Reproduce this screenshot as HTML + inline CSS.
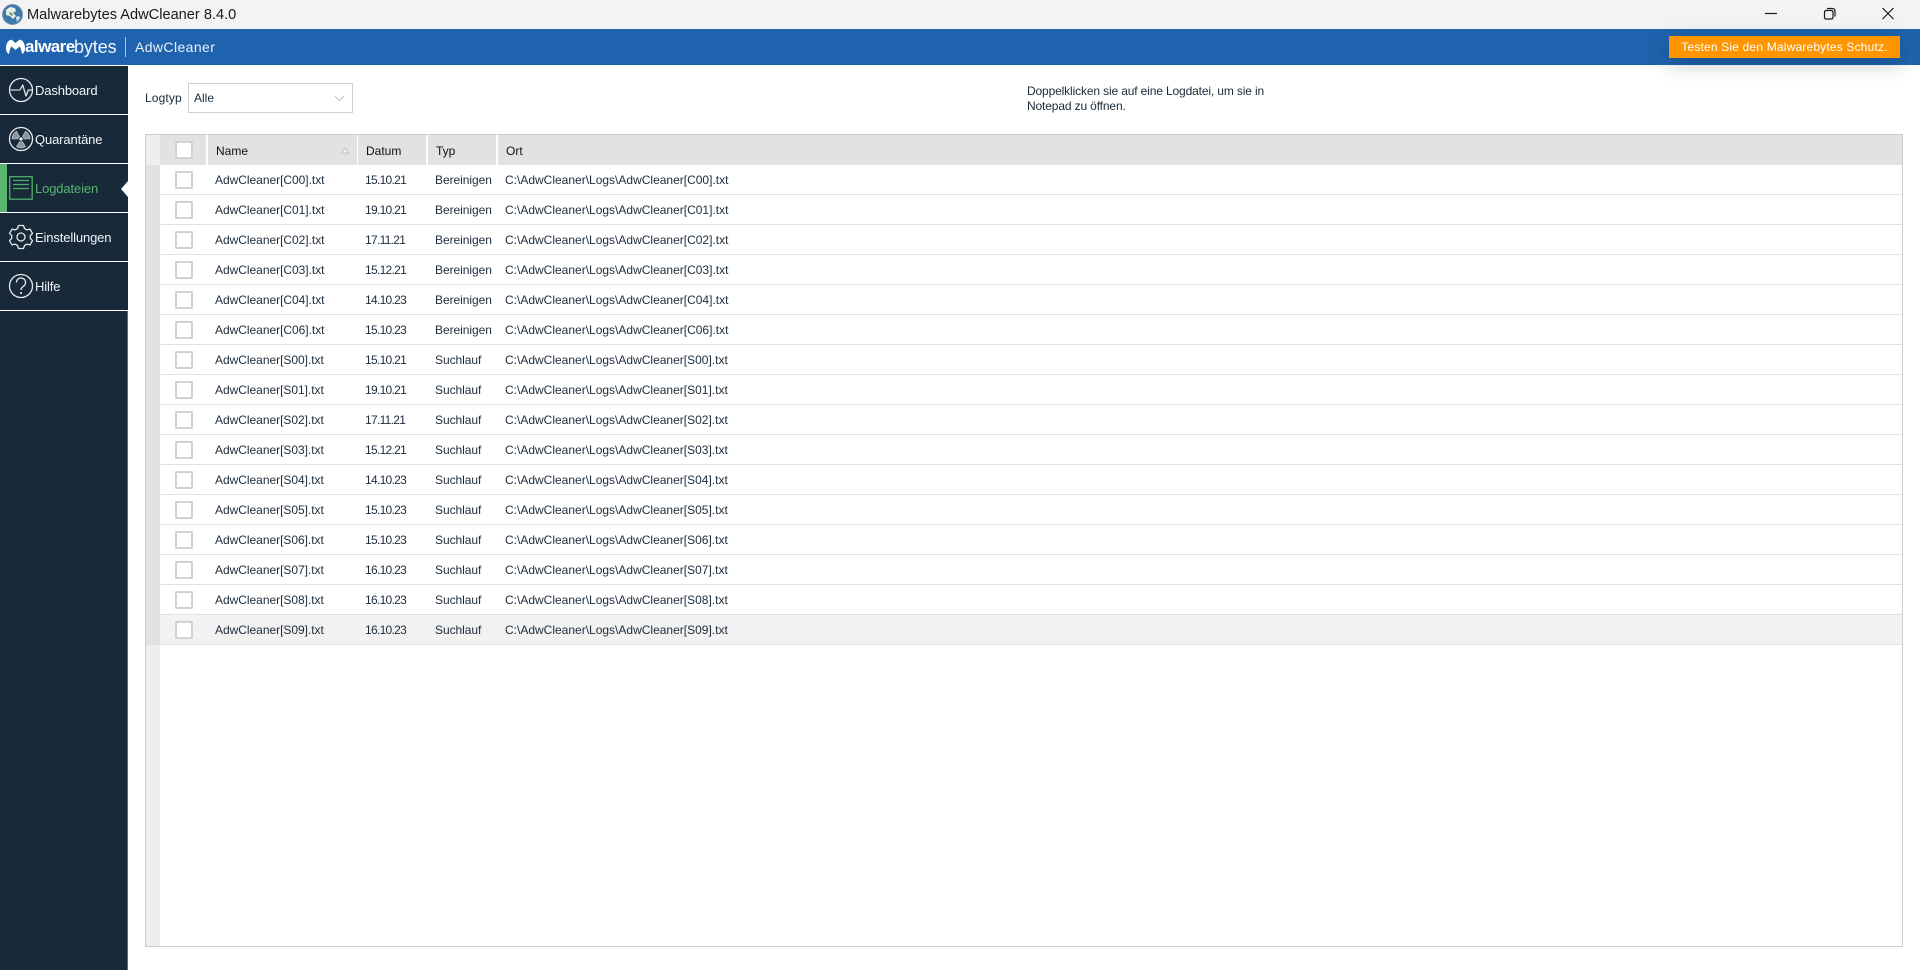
<!DOCTYPE html>
<html lang="de"><head><meta charset="utf-8"><title>Malwarebytes AdwCleaner 8.4.0</title>
<style>
html,body{margin:0;padding:0;width:1920px;height:970px;overflow:hidden;background:#fff;font-family:"Liberation Sans",sans-serif;color:#1a2a3a}
div,span,svg{position:absolute;box-sizing:border-box}
.t{white-space:nowrap;line-height:16px}
.nav{left:35px;font-size:13px;color:#f2f6fa;letter-spacing:-.13px;height:16px}
.sep{left:0;width:128px;height:1px;background:#fff}
.h{top:135px;height:30px;background:#e2e2e2;font-size:12px;line-height:32px;color:#111;white-space:nowrap}
.r{left:160px;width:1742px;height:30px;border-bottom:1px solid #e2e2e2;font-size:12px;color:#1d2c3b;white-space:nowrap}
.r span{top:1px;line-height:29px}
.r .a{left:55px;letter-spacing:-.03px}.r .b{left:205px;letter-spacing:-.7px}.r .c{left:275px;letter-spacing:-.05px}.r .d{left:345px}
.cb{left:15px;top:6px;width:18px;height:18px;border:2px solid #d0d3d6;border-radius:1px;background:#fff}
</style></head><body>
<div style="left:0;top:0;width:1920px;height:29px;background:#f3f3f3"></div>
<svg style="left:2px;top:4px" width="21" height="21" viewBox="0 0 21 21"><circle cx="10.500" cy="10.500" r="10" fill="#3f78ad"/><circle cx="10.500" cy="10.500" r="10" fill="none" stroke="#7b93ab" stroke-width="1"/><path d="M4 6l4-3 5 1 1 3-3 2 3 3-3 3-3-3-4-1z" fill="#e6efe8"/><path d="M14 13l3-1 1 2-3 4z" fill="#dce8ee"/><path d="M7 8l3 1 1 3-3-1z" fill="#5d9a63"/></svg>
<div class="t" style="left:27px;top:6px;font-size:14.600px;line-height:18px;color:#1a1a1a">Malwarebytes AdwCleaner 8.4.0</div>
<svg style="left:1760px;top:4px" width="150" height="20" viewBox="0 0 150 20" fill="none" stroke="#1a1a1a" stroke-width="1.200"><path d="M5 9.500h12"/><rect x="64.500" y="6.500" width="8.500" height="8.500" rx="1.500"/><path d="M67 4.500h5.500a2.500 2.500 0 0 1 2.500 2.500v5.500"/><path d="M122.500 4l11 11M133.500 4l-11 11"/></svg>

<div style="left:0;top:29px;width:1920px;height:36px;background:#1f63ae"></div>
<svg style="left:6px;top:39px" width="19" height="15" viewBox="0 0 19 15"><path d="M0 9C0 3 4 0 6 1l3.500 3L13 1c2-1 6 2 6 8 0 3-1 5-3 6-.5-3-1-6-2.500-7.500L9.500 11 5.500 7.500C4 9 3.500 12 3 15 1 14 0 12 0 9z" fill="#fff"/></svg>
<div class="t" style="left:25px;top:37px;font-size:17px;line-height:20px;color:#fff;font-weight:bold;letter-spacing:-.55px">alware</div>
<div class="t" style="left:74px;top:37px;font-size:18px;line-height:20px;color:#f1f5fa;letter-spacing:-.1px">bytes</div>
<div style="left:125px;top:37px;width:1px;height:20px;background:#a9c4e2"></div>
<div class="t" style="left:135px;top:38px;font-size:14px;line-height:18px;color:#e8f0f8;letter-spacing:.4px">AdwCleaner</div>
<div style="left:1669px;top:36px;width:231px;height:22px;background:#ff9500;box-shadow:0 6px 22px rgba(0,0,0,.22);color:#fff;font-size:12px;line-height:22px;text-align:center;letter-spacing:.18px;white-space:nowrap">Testen Sie den Malwarebytes Schutz.</div>

<div style="left:0;top:66px;width:128px;height:904px;background:#18293a;border-right:1px solid #5e6b78"></div>
<div style="left:0;top:66px;width:128px;height:244px;background:#18293a"></div>
<div class="sep" style="top:114px"></div><div class="sep" style="top:163px"></div><div class="sep" style="top:212px"></div><div class="sep" style="top:261px"></div><div class="sep" style="top:310px"></div>
<div style="left:0;top:164px;width:7px;height:48px;background:#5ab56e"></div>
<svg style="left:121px;top:181px" width="7" height="16" viewBox="0 0 7 16"><path d="M7 0v16L0 8z" fill="#fff"/></svg>

<svg style="left:8px;top:77px" width="26" height="26" viewBox="0 0 26 26" fill="none" stroke="#e6e9ec" stroke-width="1.300"><circle cx="13" cy="13" r="11.500"/><path d="M1.500 13H12" stroke="#a8b0b8" stroke-width="1.600"/><path d="M12 13L14.700 8 18 19 20.300 13H24.500" stroke-linejoin="round"/></svg>
<div class="t nav" style="top:83px">Dashboard</div>
<svg style="left:8px;top:126px" width="26" height="26" viewBox="0 0 26 26"><circle cx="13" cy="13" r="11.500" fill="none" stroke="#e6e9ec" stroke-width="1.300"/><circle cx="13" cy="13" r="1.700" fill="#e6e9ec"/><g fill="#8e979f" stroke="#c9ced3" stroke-width=".6"><path transform="rotate(60 13 13)" d="M14.500 10.400L17.500 5.200A9 9 0 0 0 8.500 5.200L11.500 10.400A3 3 0 0 1 14.500 10.400z"/><path transform="rotate(180 13 13)" d="M14.500 10.400L17.500 5.200A9 9 0 0 0 8.500 5.200L11.500 10.400A3 3 0 0 1 14.500 10.400z"/><path transform="rotate(300 13 13)" d="M14.500 10.400L17.500 5.200A9 9 0 0 0 8.500 5.200L11.500 10.400A3 3 0 0 1 14.500 10.400z"/></g></svg>
<div class="t nav" style="top:132px">Quarantäne</div>
<svg style="left:9px;top:176px" width="24" height="24" viewBox="0 0 24 24" fill="none" stroke="#4fae68" stroke-width="1.300"><rect x=".7" y=".7" width="22.500" height="22.500"/><path d="M4 4.500h16M4 8.500h16M4 12.500h16" stroke-width="1.300"/></svg>
<div class="t nav" style="top:181px;color:#54b56d">Logdateien</div>
<svg style="left:8px;top:224px" width="26" height="26" viewBox="0 0 26 26" fill="none" stroke="#e6e9ec" stroke-width="1.300"><circle cx="13" cy="13" r="4"/><path d="M10.500 1.500h5l1 3 2.500 1.400 3-.8 2.500 4.300-2.200 2.200v2.800l2.200 2.200-2.500 4.300-3-.8-2.500 1.400-1 3h-5l-1-3-2.500-1.400-3 .8-2.500-4.300 2.200-2.200v-2.800L1.500 9.400 4 5.100l3 .8 2.500-1.400z" stroke-linejoin="round"/></svg>
<div class="t nav" style="top:230px">Einstellungen</div>
<svg style="left:8px;top:273px" width="26" height="26" viewBox="0 0 26 26" fill="none" stroke="#e6e9ec" stroke-width="1.300"><circle cx="13" cy="13" r="11.500"/><path d="M8.500 9.500a4.500 4.500 0 1 1 7 3.700c-1.500 1-2.500 2-2.500 3.800"/><path d="M13 19v2" stroke-width="1.600"/></svg>
<div class="t nav" style="top:279px">Hilfe</div>

<div class="t" style="left:145px;top:90px;font-size:12px;letter-spacing:.12px">Logtyp</div>
<div style="left:188px;top:83px;width:165px;height:30px;border:1.500px solid #cfcfcf;background:#fff"></div>
<div class="t" style="left:194px;top:90px;font-size:12px">Alle</div>
<svg style="left:334px;top:95px" width="11" height="7" viewBox="0 0 11 7" fill="none" stroke="#c4c4c4" stroke-width="1"><path d="M1 1l4.500 4.500L10 1"/></svg>
<div class="t" style="left:1027px;top:84px;font-size:12px;line-height:15px;letter-spacing:-.14px">Doppelklicken sie auf eine Logdatei, um sie in<br>Notepad zu öffnen.</div>

<div style="left:145px;top:134px;width:1758px;height:813px;border:1.500px solid #cdcdcd;background:#fff"></div>
<div style="left:146px;top:135px;width:14px;height:811px;background:#eeeeee"></div>
<div style="left:146px;top:165px;width:14px;height:480px;background:#e2e2e2"></div>
<div class="h" style="left:160px;width:46px"><div class="cb"></div></div>
<div class="h" style="left:208px;width:149px;padding-left:8px">Name<svg style="left:133px;top:12px" width="8" height="7" viewBox="0 0 8 7"><path d="M4 1l3.500 5H.5z" fill="#f1f1f1" stroke="#b8b8b8" stroke-width=".7"/></svg></div>
<div class="h" style="left:358px;width:68px;padding-left:8px">Datum</div>
<div class="h" style="left:428px;width:68px;padding-left:8px">Typ</div>
<div class="h" style="left:498px;width:1404px;padding-left:8px">Ort</div>

<div class="r" style="top:165px"><div class="cb"></div><span class="a">AdwCleaner[C00].txt</span><span class="b">15.10.21</span><span class="c">Bereinigen</span><span class="d">C:\AdwCleaner\Logs\AdwCleaner[C00].txt</span></div>
<div class="r" style="top:195px"><div class="cb"></div><span class="a">AdwCleaner[C01].txt</span><span class="b">19.10.21</span><span class="c">Bereinigen</span><span class="d">C:\AdwCleaner\Logs\AdwCleaner[C01].txt</span></div>
<div class="r" style="top:225px"><div class="cb"></div><span class="a">AdwCleaner[C02].txt</span><span class="b">17.11.21</span><span class="c">Bereinigen</span><span class="d">C:\AdwCleaner\Logs\AdwCleaner[C02].txt</span></div>
<div class="r" style="top:255px"><div class="cb"></div><span class="a">AdwCleaner[C03].txt</span><span class="b">15.12.21</span><span class="c">Bereinigen</span><span class="d">C:\AdwCleaner\Logs\AdwCleaner[C03].txt</span></div>
<div class="r" style="top:285px"><div class="cb"></div><span class="a">AdwCleaner[C04].txt</span><span class="b">14.10.23</span><span class="c">Bereinigen</span><span class="d">C:\AdwCleaner\Logs\AdwCleaner[C04].txt</span></div>
<div class="r" style="top:315px"><div class="cb"></div><span class="a">AdwCleaner[C06].txt</span><span class="b">15.10.23</span><span class="c">Bereinigen</span><span class="d">C:\AdwCleaner\Logs\AdwCleaner[C06].txt</span></div>
<div class="r" style="top:345px"><div class="cb"></div><span class="a">AdwCleaner[S00].txt</span><span class="b">15.10.21</span><span class="c">Suchlauf</span><span class="d">C:\AdwCleaner\Logs\AdwCleaner[S00].txt</span></div>
<div class="r" style="top:375px"><div class="cb"></div><span class="a">AdwCleaner[S01].txt</span><span class="b">19.10.21</span><span class="c">Suchlauf</span><span class="d">C:\AdwCleaner\Logs\AdwCleaner[S01].txt</span></div>
<div class="r" style="top:405px"><div class="cb"></div><span class="a">AdwCleaner[S02].txt</span><span class="b">17.11.21</span><span class="c">Suchlauf</span><span class="d">C:\AdwCleaner\Logs\AdwCleaner[S02].txt</span></div>
<div class="r" style="top:435px"><div class="cb"></div><span class="a">AdwCleaner[S03].txt</span><span class="b">15.12.21</span><span class="c">Suchlauf</span><span class="d">C:\AdwCleaner\Logs\AdwCleaner[S03].txt</span></div>
<div class="r" style="top:465px"><div class="cb"></div><span class="a">AdwCleaner[S04].txt</span><span class="b">14.10.23</span><span class="c">Suchlauf</span><span class="d">C:\AdwCleaner\Logs\AdwCleaner[S04].txt</span></div>
<div class="r" style="top:495px"><div class="cb"></div><span class="a">AdwCleaner[S05].txt</span><span class="b">15.10.23</span><span class="c">Suchlauf</span><span class="d">C:\AdwCleaner\Logs\AdwCleaner[S05].txt</span></div>
<div class="r" style="top:525px"><div class="cb"></div><span class="a">AdwCleaner[S06].txt</span><span class="b">15.10.23</span><span class="c">Suchlauf</span><span class="d">C:\AdwCleaner\Logs\AdwCleaner[S06].txt</span></div>
<div class="r" style="top:555px"><div class="cb"></div><span class="a">AdwCleaner[S07].txt</span><span class="b">16.10.23</span><span class="c">Suchlauf</span><span class="d">C:\AdwCleaner\Logs\AdwCleaner[S07].txt</span></div>
<div class="r" style="top:585px"><div class="cb"></div><span class="a">AdwCleaner[S08].txt</span><span class="b">16.10.23</span><span class="c">Suchlauf</span><span class="d">C:\AdwCleaner\Logs\AdwCleaner[S08].txt</span></div>
<div class="r" style="top:615px;background:#f2f2f2"><div class="cb"></div><span class="a">AdwCleaner[S09].txt</span><span class="b">16.10.23</span><span class="c">Suchlauf</span><span class="d">C:\AdwCleaner\Logs\AdwCleaner[S09].txt</span></div>
</body></html>
